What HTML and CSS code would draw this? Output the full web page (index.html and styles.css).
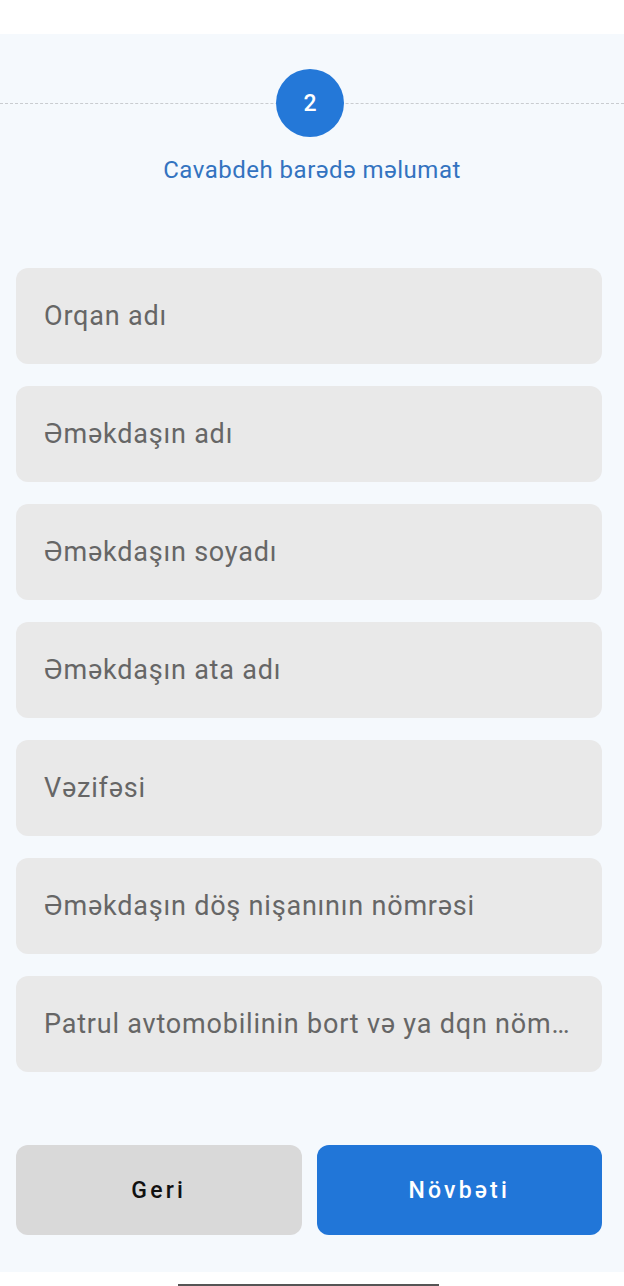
FILE: index.html
```html
<!DOCTYPE html>
<html lang="az">
<head>
<meta charset="utf-8">
<link rel="stylesheet" href="styles.css">
</head>
<body>
<div class="screen">
  <div class="status"></div>
  <main class="main">
    <div class="stepper">
      <div class="step-line"></div>
      <div class="step-circle">2</div>
    </div>
    <div class="step-title">Cavabdeh barədə məlumat</div>
    <div class="fields">
      <div class="field">Orqan adı</div>
      <div class="field">Əməkdaşın adı</div>
      <div class="field">Əməkdaşın soyadı</div>
      <div class="field">Əməkdaşın ata adı</div>
      <div class="field">Vəzifəsi</div>
      <div class="field">Əməkdaşın döş nişanının nömrəsi</div>
      <div class="field">Patrul avtomobilinin bort və ya dqn nömrəsi</div>
    </div>
    <div class="actions">
      <button class="btn btn-back">Geri</button>
      <button class="btn btn-next">Növbəti</button>
    </div>
  </main>
  <div class="home"><div class="home-bar"></div></div>
</div>
</body>
</html>
```
FILE: styles.css
```css
* { box-sizing: border-box; }
html, body { margin: 0; padding: 0; background: #ffffff; }
body { font-family: Roboto, "Noto Sans", "DejaVu Sans", sans-serif; }
.screen { width: 624px; height: 1286px; display: flex; flex-direction: column; }
.status { height: 34px; background: #ffffff; flex: none; }
.main { flex: 1; background: #f5f9fd; display: flex; flex-direction: column; }
.stepper { position: relative; height: 68px; margin-top: 35px; display: flex; justify-content: center; }
.step-line { position: absolute; left: 0; right: 0; top: 34px; border-top: 1px dashed #c9ccd0; }
.step-circle {
  position: relative; width: 68px; height: 68px; border-radius: 50%;
  background: #2478d8; color: #fff; font-size: 23px; font-weight: 500;
  display: flex; align-items: center; justify-content: center; margin-left: -4px;
}
.step-title { text-align: center; color: #3373c0; font-size: 24px; letter-spacing: 0.5px; margin-top: 18px; line-height: 30px; }
.fields { display: flex; flex-direction: column; gap: 22px; padding: 0 22px 0 16px; margin-top: 83px; }
.field {
  height: 96px; border-radius: 12px; background: #e9e9e9; color: #666;
  font-size: 27px; letter-spacing: 0.8px; padding: 0 32px 0 28px; display: block; line-height: 96px;
  white-space: nowrap; overflow: hidden; text-overflow: ellipsis;
}
.actions { display: flex; gap: 15px; padding: 0 22px 0 16px; margin-top: 73px; }
.btn {
  flex: 1; height: 90px; border: none; border-radius: 12px; font-family: inherit;
  font-size: 23px; letter-spacing: 3.2px; font-weight: 500;
}
.btn-back { background: #d9d9d9; color: #111; }
.btn-next { background: #2176d8; color: #fff; }
.home { height: 14px; background: #fff; flex: none; display: flex; justify-content: center; align-items: flex-end; }
.home-bar { width: 261px; height: 2px; background: #555; margin-left: -8px; }
```
